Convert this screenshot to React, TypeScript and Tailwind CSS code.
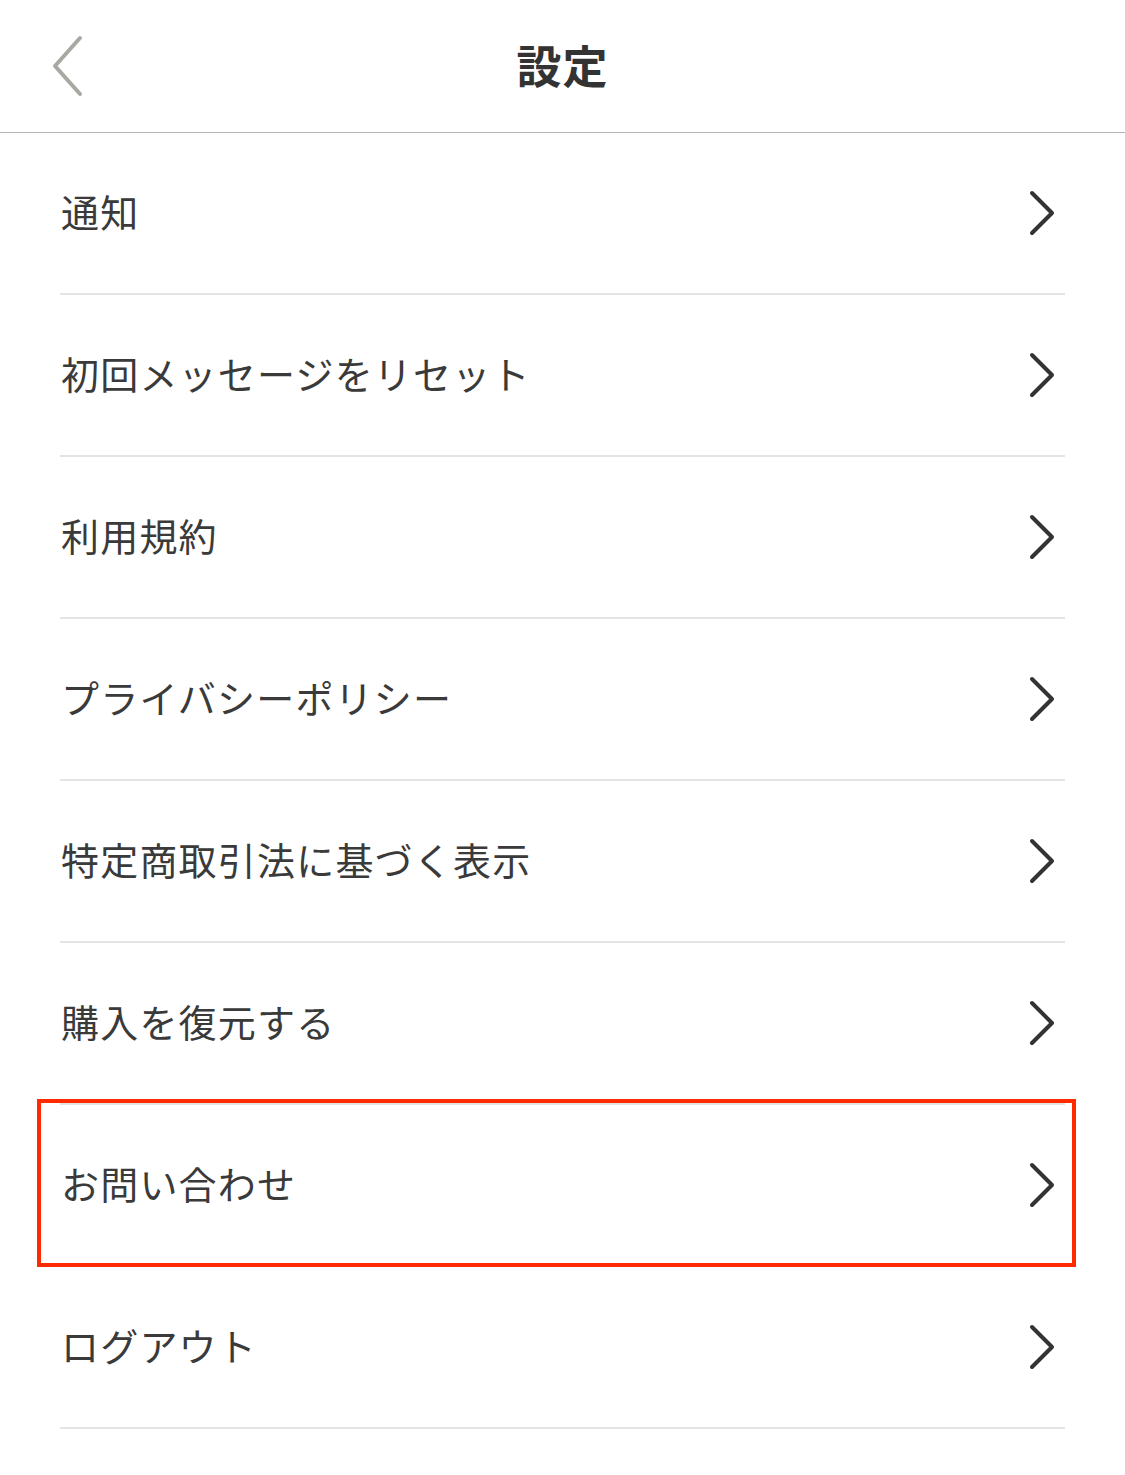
const items = [
  "通知",
  "初回メッセージをリセット",
  "利用規約",
  "プライバシーポリシー",
  "特定商取引法に基づく表示",
  "購入を復元する",
  "お問い合わせ",
  "ログアウト",
];

const Chevron = () => (
  <svg width="28" height="48" viewBox="0 0 28 48" fill="none">
    <path
      d="M4 4 L24 24 L4 44"
      stroke="#333333"
      strokeWidth="4"
      strokeLinecap="round"
      strokeLinejoin="round"
    />
  </svg>
);

export default function App() {
  return (
    <div
      className="w-[1125px] min-h-[1475px] bg-white text-[#3a3a3a]"
      style={{ fontFamily: '"Noto Sans CJK JP", "Noto Sans", sans-serif' }}
    >
      <header className="relative h-[133px] border-b border-[#b3b3b3] flex items-center justify-center">
        <button className="absolute left-[50px] top-[35px]">
          <svg width="34" height="62" viewBox="0 0 34 62" fill="none">
            <path
              d="M30 3 L5 31 L30 59"
              stroke="#a8a9a2"
              strokeWidth="4"
              strokeLinecap="round"
              strokeLinejoin="round"
            />
          </svg>
        </button>
        <h1 className="text-[45px] font-bold text-[#333333] tracking-[1px] pb-[2px]">設定</h1>
      </header>

      <ul className="px-[60px]">
        {items.map((label, i) => (
          <li
            key={label}
            className="relative h-[162px] border-b-2 border-[#e4e4e4] flex items-center justify-between pr-[9px]"
          >
            <span className="pl-[1px] pb-[4px] text-[38px] leading-none tracking-[1.2px]">{label}</span>
            <Chevron />
            {i === 6 && (
              <div className="absolute left-[-23px] right-[-11px] top-[-6px] bottom-[-2px] border-[4px] border-[#ff2a00] pointer-events-none" />
            )}
          </li>
        ))}
      </ul>
    </div>
  );
}
